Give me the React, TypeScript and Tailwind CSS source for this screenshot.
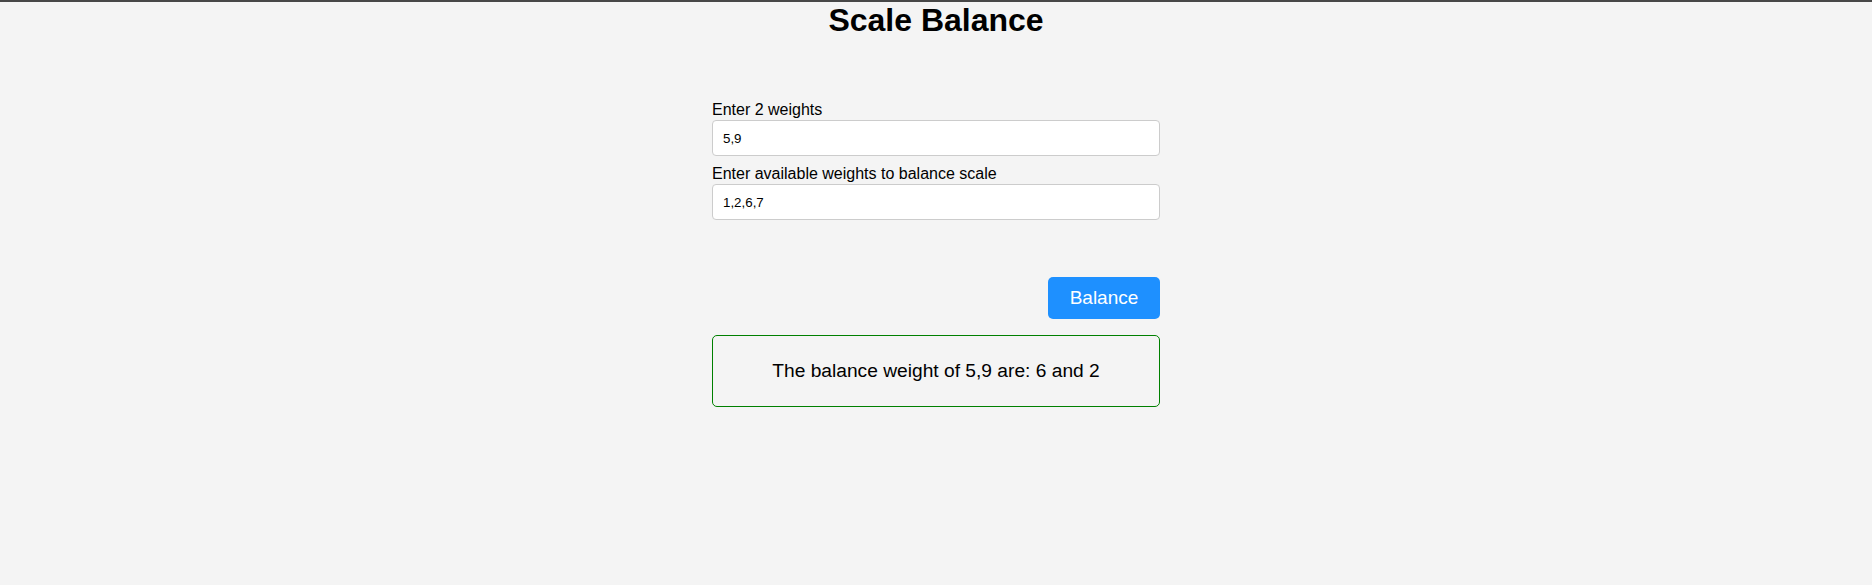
import React from "react";

export default function App() {
  return (
    <div
      className="min-h-[585px] w-full bg-[#f4f4f4] border-t-2 border-[#474747] text-black leading-[normal]"
      style={{ fontFamily: '"Liberation Sans", Arial, sans-serif' }}
    >
      <h1 className="m-0 text-center text-[32px] font-bold leading-[normal]">Scale Balance</h1>
      <div className="mx-auto mt-[62px] w-[448px] flex flex-col">
        <label className="block text-[16px] leading-[normal]">Enter 2 weights</label>
        <input
          className="mt-[1px] h-[36px] w-full rounded-[4px] border border-[#cccccc] bg-white px-[10px] text-[13.33px] leading-[normal] text-black outline-none"
          defaultValue="5,9"
        />
        <label className="mt-[9px] block text-[16px] leading-[normal]">
          Enter available weights to balance scale
        </label>
        <input
          className="mt-[1px] h-[36px] w-full rounded-[4px] border border-[#cccccc] bg-white px-[10px] text-[13.33px] leading-[normal] text-black outline-none"
          defaultValue="1,2,6,7"
        />
        <div className="mt-[57px] flex justify-end">
          <button className="h-[42px] w-[112px] rounded-[5px] bg-[#1e90ff] text-[19px] leading-[normal] text-white">
            Balance
          </button>
        </div>
        <div className="mt-[16px] flex h-[72px] items-center justify-center rounded-[5px] border border-[#008000] text-[19.2px] leading-[normal]">
          The balance weight of 5,9 are: 6 and 2
        </div>
      </div>
    </div>
  );
}
